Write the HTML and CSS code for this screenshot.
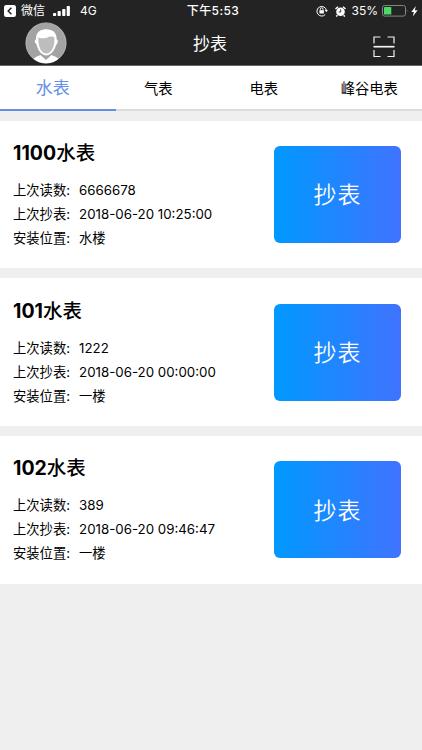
FILE: index.html
```html
<!DOCTYPE html>
<html lang="zh-CN">
<head>
  <meta charset="UTF-8">
  <meta name="viewport" content="width=device-width, initial-scale=1.0">
  <title>抄表</title>
  <link rel="stylesheet" href="styles.css">
</head>
<body>
  <!-- Header -->
  <header class="header">
    <div class="status-bar">
      <div class="status-left">
        <svg class="back-icon" width="12" height="12" viewBox="0 0 12 12">
          <rect width="12" height="12" rx="2.2" fill="#fff"/>
          <path d="M7.4 2.8L4.2 6l3.2 3.2" fill="none" stroke="#232323" stroke-width="1.5"/>
        </svg>
        <span class="app-name">微信</span>
        <svg class="signal-icon" width="17" height="11" viewBox="0 0 17 11" fill="#fff">
          <rect x="0" y="7" width="3.2" height="3" rx="0.8"/>
          <rect x="4.6" y="5" width="3.2" height="5" rx="0.8"/>
          <rect x="9.2" y="3" width="3.2" height="7" rx="0.8"/>
          <rect x="13.7" y="0" width="3.2" height="10" rx="0.8"/>
        </svg>
        <span class="network">4G</span>
      </div>
      <div class="status-time">下午5:53</div>
      <div class="status-right">
        <svg class="lock-icon" width="12" height="12" viewBox="0 0 12 12" fill="none" stroke="#fff">
          <path d="M9.2 9.6A4.8 4.8 0 1 1 10.4 5.2" stroke-width="1"/>
          <path d="M8.7 5h3.2l-1.6 2.2z" fill="#fff" stroke="none"/>
          <rect x="3.4" y="5.2" width="4.5" height="3.3" fill="#fff" stroke="none"/>
          <path d="M4.3 5.3V4.2a1.35 1.35 0 0 1 2.7 0v1.1" stroke-width="0.9"/>
        </svg>
        <svg class="alarm-icon" width="11" height="11" viewBox="0 0 11 11">
          <circle cx="5.5" cy="5.8" r="4.3" fill="#fff"/>
          <path d="M0.5 3L3 0.8M10.5 3L8 0.8M2.4 9.2L1.2 10.5M8.6 9.2l1.2 1.3" stroke="#fff" stroke-width="1.5"/>
          <path d="M5.7 3.3V6H3.6" fill="none" stroke="#232323" stroke-width="0.9"/>
        </svg>
        <span class="battery-text">35%</span>
        <svg class="battery-icon" width="26" height="12" viewBox="0 0 26 12">
          <rect x="0.5" y="0.5" width="23" height="10.6" rx="2.2" fill="none" stroke="#858585"/>
          <rect x="2" y="2" width="7.3" height="7.6" rx="0.6" fill="#4cd964"/>
          <path d="M24.8 4.2q1.2 1.6 0 3.2z" fill="#858585"/>
        </svg>
        <svg class="bolt-icon" width="7" height="11" viewBox="0 0 7 11">
          <path d="M4.8 0L0.3 6h2.6L1.8 10.6 6.6 4.3H3.8z" fill="#fff"/>
        </svg>
      </div>
    </div>
    <div class="title-bar">
      <svg class="avatar" width="42" height="42" viewBox="0 0 42 42">
        <circle cx="21" cy="21" r="20.1" fill="#a3a3a3" stroke="#c4c4c4" stroke-width="0.8"/>
        <path d="M8.500 36.800q2.200-2 7-3.800L21 38l5.500-5q4.800 1.800 7 3.800Q28 41.300 21 41.300T8.500 36.800z" fill="#fff"/>
        <path d="M11 21Q9.300 22 9.800 18.600L10.800 17.600Q10.500 8 20 7.300Q31.500 6.300 31.800 17.400Q33.500 18 32.400 21L31 23.500Q28 32.500 21.300 33.500Q14.300 32.500 11.800 23.500z" fill="#fff"/>
        <path d="M13.300 15.500Q19 17.500 24 14.800Q28.500 14 29.500 16Q29.600 26 25 30Q21.300 33 17.500 30Q13 26 13.300 15.500z" fill="#bdbdbd"/>
      </svg>
      <h1 class="page-title">抄表</h1>
      <svg class="scan-icon" width="22" height="22" viewBox="0 0 22 22" fill="none" stroke="#f2f2f2">
        <path d="M1 7.500V1h6.500M14.500 1H21v6.500M1 14v6.500h6.500M14.500 20.500H21V14" stroke-width="1.2"/>
        <path d="M0.500 10.700h21" stroke-width="1.700"/>
      </svg>
    </div>
  </header>

  <!-- Meter type tabs -->
  <nav class="tabs">
    <div class="tab active">水表</div>
    <div class="tab">气表</div>
    <div class="tab">电表</div>
    <div class="tab">峰谷电表</div>
  </nav>

  <!-- Meter list -->
  <main class="meter-list">
    <section class="meter-card">
      <div class="meter-info">
        <h2 class="meter-name"><b>1100</b>水表</h2>
        <p class="meter-row">上次读数:<span>6666678</span></p>
        <p class="meter-row">上次抄表:<span>2018-06-20 10:25:00</span></p>
        <p class="meter-row">安装位置:<span>水楼</span></p>
      </div>
      <button class="read-btn">抄表</button>
    </section>

    <section class="meter-card">
      <div class="meter-info">
        <h2 class="meter-name"><b>101</b>水表</h2>
        <p class="meter-row">上次读数:<span>1222</span></p>
        <p class="meter-row">上次抄表:<span>2018-06-20 00:00:00</span></p>
        <p class="meter-row">安装位置:<span>一楼</span></p>
      </div>
      <button class="read-btn">抄表</button>
    </section>

    <section class="meter-card">
      <div class="meter-info">
        <h2 class="meter-name"><b>102</b>水表</h2>
        <p class="meter-row">上次读数:<span>389</span></p>
        <p class="meter-row">上次抄表:<span>2018-06-20 09:46:47</span></p>
        <p class="meter-row">安装位置:<span>一楼</span></p>
      </div>
      <button class="read-btn">抄表</button>
    </section>
  </main>
</body>
</html>
```

FILE: styles.css
```css
:root {
  --header: #232323;
  --primary: #638fe6;
  --page: #efefef;
}

* {
  margin: 0;
  padding: 0;
  box-sizing: border-box;
}

body {
  font-family: Inter, "Noto Sans CJK SC", sans-serif;
  background-color: var(--page);
  color: #000;
  min-height: 100vh;
}

/* Header */
.header {
  height: 66px;
  background-color: var(--header);
  border-bottom: 1px solid #666;
  color: #fff;
}

.status-bar {
  display: grid;
  grid-template-columns: 1fr auto 1fr;
  align-items: center;
  height: 22px;
  padding: 0 4px;
  font-size: 12px;
  line-height: 22px;
}

.status-left,
.status-right {
  display: flex;
  align-items: center;
}

.status-right {
  justify-content: flex-end;
}

.app-name {
  margin-left: 5px;
}

.signal-icon {
  margin-left: 8px;
}

.network {
  margin-left: 10px;
}

.status-time {
  padding-left: 4px;
  font-weight: 500;
  letter-spacing: 0.4px;
}

.alarm-icon {
  margin-left: 7px;
}

.battery-text {
  margin-left: 6px;
}

.battery-icon {
  margin-left: 4px;
}

.bolt-icon {
  margin-left: 3px;
}

.title-bar {
  display: grid;
  grid-template-columns: 1fr auto 1fr;
  align-items: center;
  height: 42px;
  padding: 0 27px 0 25px;
}

.page-title {
  padding-top: 2px;
  font-size: 17px;
  font-weight: 400;
  line-height: 40px;
}

.scan-icon {
  justify-self: end;
  margin-top: 7px;
}

/* Tabs */
.tabs {
  display: flex;
  height: 45px;
  background-color: #fff;
  border-bottom: 2px solid #dcdcdc;
}

.tab {
  flex: 1;
  font-size: 14.3px;
  line-height: 45px;
  text-align: center;
}

.tab.active {
  position: relative;
  font-size: 17px;
  color: var(--primary);
}

.tab.active::after {
  content: "";
  position: absolute;
  left: 0;
  bottom: -2px;
  width: 116px;
  height: 2px;
  background-color: var(--primary);
}

/* Meter list */
.meter-list {
  display: flex;
  flex-direction: column;
  gap: 10px;
  padding-top: 9.5px;
}

.meter-card {
  display: flex;
  justify-content: space-between;
  align-items: center;
  height: 147.7px;
  padding: 0 21px 0 13px;
  background-color: #fff;
}

.meter-info {
  padding-bottom: 1px;
}

.meter-name {
  margin-bottom: 10px;
  font-size: 19.5px;
  font-weight: 500;
  line-height: 30px;
}

.meter-row {
  font-size: 13.3px;
  line-height: 24px;
}

.meter-row span {
  margin-left: 9px;
}

.read-btn {
  width: 127px;
  height: 97px;
  padding-bottom: 2px;
  border: none;
  border-radius: 6px;
  background: linear-gradient(to right, #0099ff, #4073ff);
  color: #fff;
  font-family: inherit;
  font-size: 23px;
  font-weight: 350;
  letter-spacing: 1px;
}
```
